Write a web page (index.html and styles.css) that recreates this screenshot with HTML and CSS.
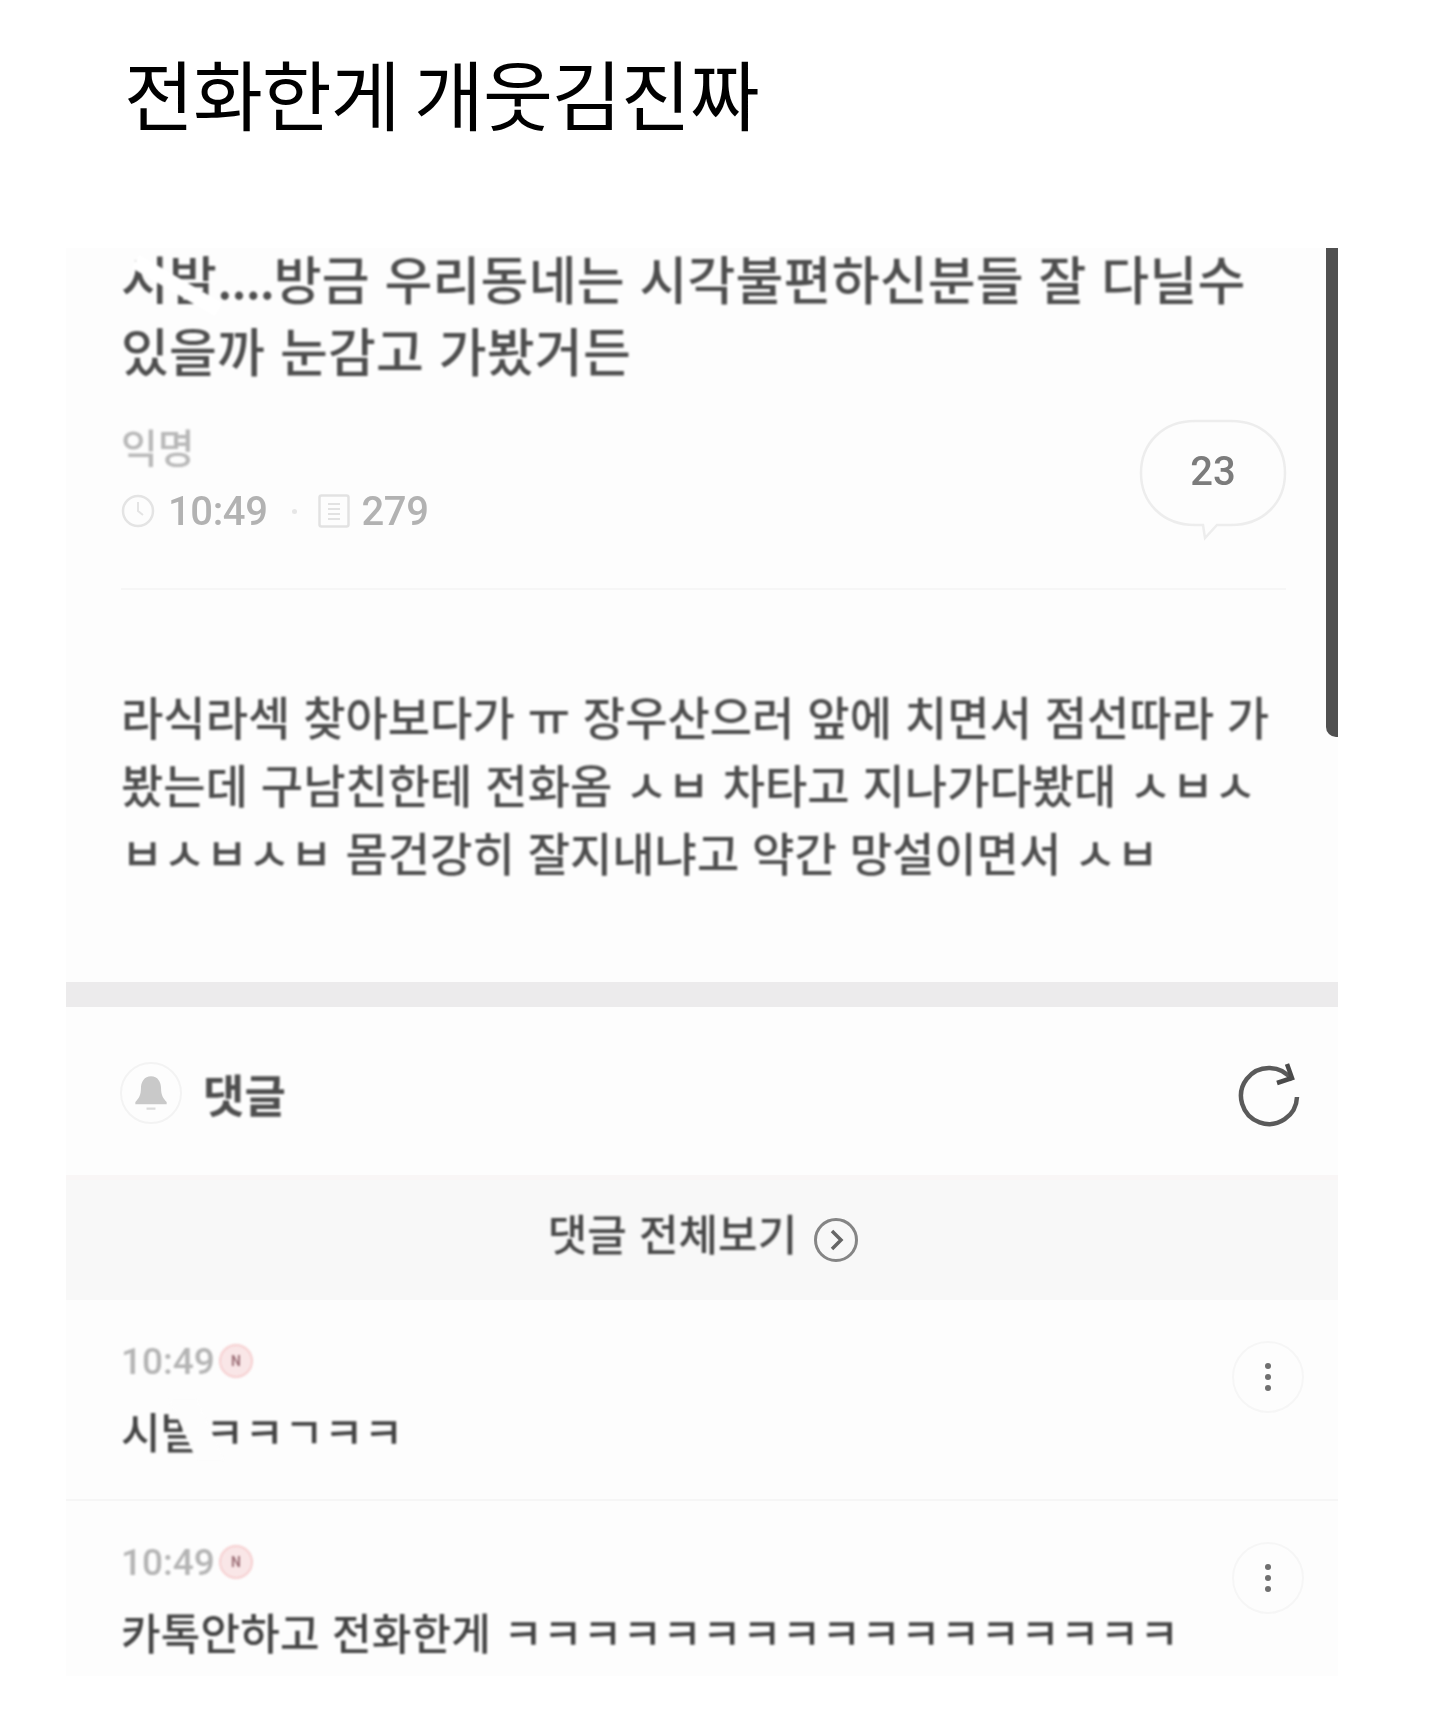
FILE: index.html
```html
<!DOCTYPE html>
<html lang="ko">
  <head>
    <meta charset="utf-8">
    <title>전화한게 개웃김진짜</title>
    <link rel="stylesheet" href="styles.css">
  </head>
  <body>
    <h1 class="caption">전화한게 개웃김진짜</h1>

    <div class="card">
      <div class="scrollbar"></div>

      <div class="post-head">
        <h2 class="post-title">
          <span class="censor-wrap">시발<span class="censor-slash"></span></span><span class="dots">....</span>방금 우리동네는 시각불편하신분들 잘 다닐수<br>있을까 눈감고 가봤거든
        </h2>
        <div class="meta-row">
          <div>
            <div class="author">익명</div>
            <div class="stats">
              <svg class="icon-clock" viewBox="0 0 34 34">
                <circle cx="17" cy="17" r="15" fill="none" stroke="#e4e4e4" stroke-width="2.5"/>
                <path d="M17 8v9l5 4" fill="none" stroke="#e4e4e4" stroke-width="2"/>
              </svg>
              <span class="stat-num">10:49</span>
              <span class="stat-dot"></span>
              <svg class="icon-doc" viewBox="0 0 32 34">
                <rect x="1.5" y="1.5" width="29" height="31" rx="2" fill="none" stroke="#e2e2e2" stroke-width="2.5"/>
                <path d="M10 10h12M10 15h12M10 20h12M10 25h12" stroke="#e2e2e2" stroke-width="2"/>
              </svg>
              <span class="stat-num">279</span>
            </div>
          </div>
          <div class="bubble">
            <svg class="bubble-shape" viewBox="0 0 148 122">
              <path d="M56 2h36c32 0 54 22 54 52s-22 52-54 52H78l-12 13-2-13h-8C24 106 2 84 2 54S24 2 56 2z" fill="none" stroke="#ededed" stroke-width="2.5"/>
            </svg>
            <span class="bubble-num">23</span>
          </div>
        </div>
      </div>

      <p class="post-body">라식라섹 찾아보다가 ㅠ 장우산으러 앞에 치면서 점선따라 가<br>봤는데 구남친한테 전화옴 ㅅㅂ 차타고 지나가다봤대 ㅅㅂㅅ<br>ㅂㅅㅂㅅㅂ 몸건강히 잘지내냐고 약간 망설이면서 ㅅㅂ</p>

      <div class="band"></div>

      <div class="comment-head">
        <div class="comment-head-left">
          <div class="bell">
            <svg viewBox="0 0 32 34" width="36" height="38">
              <path d="M16 2c-6 0-9 5-9 11 0 6-2 9-5 12v2h28v-2c-3-3-5-6-5-12 0-6-3-11-9-11z" fill="#c9c9c9"/>
              <rect x="12" y="30" width="8" height="2" fill="#dcdcdc"/>
            </svg>
          </div>
          <span class="comment-head-title">댓글</span>
        </div>
        <svg class="icon-refresh" viewBox="0 0 64 68">
          <path d="M60 36A28 28 0 1 1 55 19" fill="none" stroke="#5a5a5a" stroke-width="4.5"/>
          <path d="M50 3l5 14-15 5" fill="none" stroke="#4a4a4a" stroke-width="4.5"/>
        </svg>
      </div>

      <div class="view-all">
        <span>댓글 전체보기</span>
        <svg class="icon-go" viewBox="0 0 46 46">
          <circle cx="23" cy="23" r="20.5" fill="none" stroke="#858585" stroke-width="3"/>
          <path d="M19 14l9 9-9 9" fill="none" stroke="#666" stroke-width="3.5"/>
        </svg>
      </div>

      <div class="comment">
        <div class="comment-main">
          <div class="comment-time">10:49<span class="badge-new">N</span></div>
          <div class="comment-text short"><span class="censor-wrap">시발<span class="censor-chip"></span></span> ㅋㅋㄱㅋㅋ</div>
        </div>
        <div class="more"><i></i><i></i><i></i></div>
      </div>

      <div class="comment last">
        <div class="comment-main">
          <div class="comment-time">10:49<span class="badge-new">N</span></div>
          <div class="comment-text">카톡안하고 전화한게 ㅋㅋㅋㅋㅋㅋㅋㅋㅋㅋㅋㅋㅋㅋㅋㅋㅋ</div>
        </div>
        <div class="more"><i></i><i></i><i></i></div>
      </div>
    </div>
  </body>
</html>
```

FILE: styles.css
```css
body {
  margin: 0;
  background-color: #fff;
  font-family: "Noto Sans CJK KR", "Noto Sans", sans-serif;
  color: #000;
}

.caption {
  margin: 0;
  padding: 44px 0 0 124px;
  height: 248px;
  box-sizing: border-box;
  font-size: 76px;
  line-height: 96px;
  font-weight: 400;
  letter-spacing: -1px;
  word-spacing: -6px;
}

.card {
  position: relative;
  margin-left: 66px;
  width: 1272px;
  height: 1428px;
  background-color: #fdfdfd;
}

.scrollbar {
  position: absolute;
  top: 0;
  right: 0;
  width: 12px;
  height: 489px;
  background-color: #505050;
  border-bottom-left-radius: 10px;
}

.post-head {
  display: flow-root;
  margin: 0 52px 0 55px;
  height: 342px;
  box-sizing: border-box;
  border-bottom: 2px solid #f6f6f6;
}

.post-title {
  margin: -6px 0 0;
  font-size: 52px;
  line-height: 72px;
  font-weight: 500;
  letter-spacing: 0.2px;
  color: #4e4e4e;
  filter: blur(0.9px);
}

.dots {
  letter-spacing: -1.4px;
}

.censor-wrap {
  position: relative;
  display: inline-block;
}

.censor-slash {
  position: absolute;
  left: 8px;
  top: 36px;
  width: 96px;
  height: 15px;
  background-color: #fff;
  transform: rotate(30deg);
}

.censor-chip {
  position: absolute;
  right: -10px;
  top: 0;
  width: 28px;
  height: 60px;
  background-color: #fdfdfd;
  transform: skewX(24deg);
}

.meta-row {
  display: flex;
  justify-content: space-between;
  margin-top: 33px;
}

.author {
  font-size: 40px;
  line-height: 54px;
  font-weight: 500;
  color: #b8b8b8;
  filter: blur(0.9px);
}

.stats {
  display: flex;
  align-items: center;
  margin-top: 13px;
  height: 50px;
  filter: blur(0.7px);
}

.icon-clock {
  width: 34px;
  height: 34px;
  margin-right: 13px;
}

.stat-num {
  font-family: Roboto, sans-serif;
  font-size: 40px;
  font-weight: 500;
  letter-spacing: -0.4px;
  color: #b2b2b2;
}

.stat-dot {
  width: 5px;
  height: 5px;
  margin: 0 21px 0 24px;
  border-radius: 50%;
  background-color: #e6e6e6;
}

.icon-doc {
  width: 32px;
  height: 34px;
  margin-right: 12px;
}

.bubble {
  position: relative;
  width: 148px;
  height: 122px;
  margin: 0 -1px 0 0;
  filter: blur(0.5px);
}

.bubble-shape {
  display: block;
  width: 148px;
  height: 122px;
}

.bubble-num {
  position: absolute;
  top: 25px;
  left: 0;
  width: 148px;
  text-align: center;
  font-family: Roboto, sans-serif;
  font-size: 40px;
  font-weight: 500;
  line-height: 56px;
  color: #7c7c7c;
}

.post-body {
  margin: 0 0 0 55px;
  padding-top: 91px;
  height: 392px;
  box-sizing: border-box;
  font-size: 46px;
  line-height: 68px;
  font-weight: 500;
  color: #4e4e4e;
  white-space: nowrap;
  filter: blur(0.9px);
}

.band {
  height: 25px;
  background-color: #ecebec;
  filter: blur(0.6px);
}

.comment-head {
  display: flex;
  justify-content: space-between;
  align-items: center;
  height: 173px;
  padding: 4px 37px 0 54px;
  box-sizing: border-box;
  border-bottom: 5px solid #f9f6f6;
}

.comment-head-left {
  display: flex;
  align-items: center;
}

.bell {
  display: flex;
  justify-content: center;
  align-items: center;
  width: 58px;
  height: 58px;
  border: 2px solid #f3f3f3;
  border-radius: 50%;
  margin-right: 21px;
  filter: blur(0.6px);
}

.comment-head-title {
  font-size: 45px;
  font-weight: 700;
  color: #4e4e4e;
  filter: blur(0.8px);
}

.icon-refresh {
  width: 64px;
  height: 68px;
  margin-top: 3px;
  filter: blur(0.7px);
}

.view-all {
  display: flex;
  justify-content: center;
  align-items: center;
  height: 120px;
  padding-left: 3px;
  box-sizing: border-box;
  background-color: #f8f8f8;
  font-size: 43px;
  font-weight: 500;
  color: #484848;
}

.view-all span {
  margin-bottom: 16px;
  filter: blur(0.8px);
}

.icon-go {
  width: 46px;
  height: 46px;
  margin-left: 16px;
  filter: blur(0.6px);
}

.comment {
  display: flex;
  justify-content: space-between;
  height: 201px;
  padding: 36px 34px 0 55px;
  box-sizing: border-box;
  border-bottom: 2px solid #f6f6f6;
}

.comment.last {
  height: 175px;
  border-bottom: none;
}

.comment-time {
  display: flex;
  align-items: center;
  height: 50px;
  font-family: Roboto, sans-serif;
  font-size: 37px;
  font-weight: 500;
  color: #b4b4b4;
  filter: blur(0.8px);
}

.badge-new {
  display: flex;
  justify-content: center;
  align-items: center;
  width: 30px;
  height: 30px;
  margin-left: 4px;
  border: 2px solid #f6cfd0;
  border-radius: 50%;
  background-color: #f9e6e7;
  font-size: 14px;
  font-weight: 700;
  color: #a0747c;
}

.comment-text {
  margin-top: 14px;
  font-size: 43px;
  line-height: 60px;
  font-weight: 500;
  letter-spacing: 0.2px;
  color: #444;
  white-space: nowrap;
  filter: blur(0.8px);
}

.comment-text.short {
  word-spacing: -8px;
}

.more {
  display: flex;
  flex-direction: column;
  justify-content: center;
  align-items: center;
  gap: 5px;
  width: 72px;
  height: 72px;
  margin-top: 5px;
  box-sizing: border-box;
  border: 2px solid #f6f6f6;
  border-radius: 50%;
  filter: blur(0.4px);
}

.more i {
  width: 6px;
  height: 6px;
  border-radius: 50%;
  background-color: #6f6f6f;
}
```
